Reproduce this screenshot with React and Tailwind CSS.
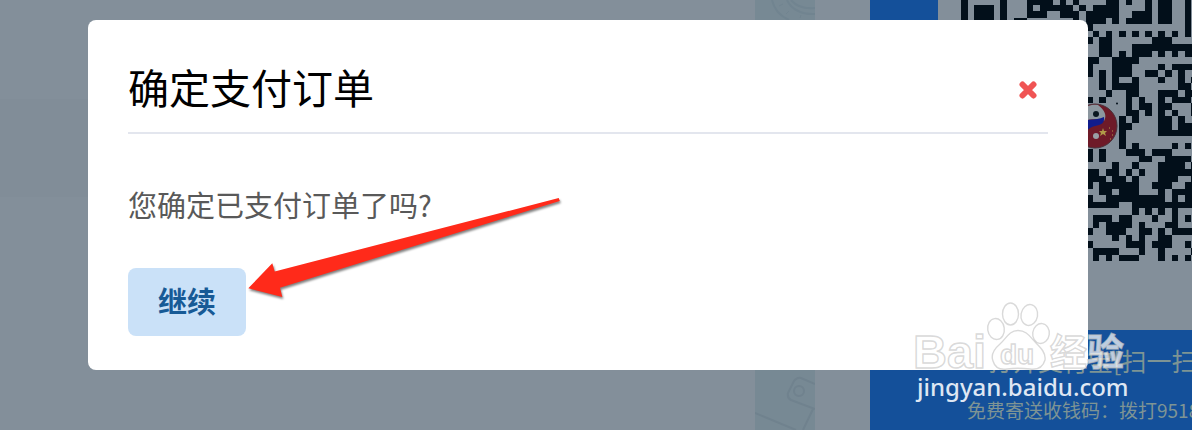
import React from 'react';

// QR modules: the first rows start at column 0, the rest at column 19
const topRows = [
    '#.....#...####.#.#....##.#..#.##..#.',
    '#.###.#...#.#####.#.####....#.##..#.',
    '#.###.#...###..###.#####..###.##..#.',
    '#.###.#.##.......#.###.#.####.##..#.'
];

const sideRows = [
    '#..............#.',
    '.#.#.#.#.#.#.#.#.',
    '#.##......###....',
    '..##...##########',
    '..##.#.###.#.#.##',
    '##..####.........',
    '#...###....#.####',
    '#.#.###..##.#.#..',
    '..#.#..#...#..#.#',
    '..#.####......##.',
    '...#..##...###.##',
    '#.#...#.#..#.###.',
    '......#.##.##...#',
    '......##.#.#.#..#',
    '.....#.#...##.#..',
    '.....##....##.###',
    '.....#.....######',
    '.....#...........',
    '.....#.#.....#.#.',
    '#.#...###.###....',
    '#.#.....##..####.',
    '....#..#...####.#',
    '##.##.#.#..######',
    '###.##.#...###..#',
    '#.######..###..##',
    '..##.###...#.####',
    '#..#########.#.##',
    '#####..##########',
    '.......#.#.#.#...',
    '.###.##...#..#.#.',
    '.#.####.#...##...',
    '#..###..##.#.####',
    '....#.#.#..##....',
    '#.....###.###..#.',
    '.####...#..#....#',
    '.#.#.###...#.#.#.'
];

const toPath = (rows, startCol, startRow) =>
    rows
        .flatMap((row, y) =>
            [...row].map((cell, x) => (cell === '#' ? `M${startCol + x} ${startRow + y}h1v1h-1z` : ''))
        )
        .join('');

const QrCode = () => (
    <svg width="231" height="262" viewBox="0 -4.5 231 262" aria-hidden="true">
        <g transform="scale(6.58)" fill="#020f1a" shapeRendering="crispEdges">
            <path d={toPath(topRows, 0, -1)} />
            <path d={toPath(sideRows, 19, 3)} />
        </g>
        <g transform="translate(134 121.5)">
            <circle r="23" fill="#838f9a" />
            <circle r="22" fill="#6e1a28" stroke="#4a3038" />
            <path d="M-22 0A22 22 0 0 1 3 -21C10 -16 12 -10 9 -5C4 -8 -10 -8 -22 0z" fill="#8c979f" />
            <path d="M-20 -2C-10 -8 0 -5 9 -9C10 -3 6 -1 0 0C-7 2 -10 6 -10 10C-16 10 -21 4 -20 -2z" fill="#101c8c" />
            <circle cx="1" cy="-12" r="3" fill="#0a1720" />
            <circle cx="1" cy="10" r="3" fill="#9aa0a5" />
            <path d="M8 2l1 3h3l-2 2 1 3-3-2-3 2 1-3-2-2h3z" fill="#b09a48" />
            <path d="M14 2h1M17 5h1M17 9h1M15 13h1" stroke="#b09a48" strokeWidth="1" />
        </g>
        <circle cx="156" cy="99" r="1" fill="#020f1a" />
    </svg>
);

const PatternStrip = () => (
    <div className="flex w-15 shrink-0 flex-col justify-between bg-[#778994]">
        <svg width="60" height="20" viewBox="0 0 60 20" fill="none" stroke="#718490" aria-hidden="true">
            <path d="M17 0C19 9 25 16 34 20M32 0C36 9 47 15 60 14M36 0C41 6 50 9 60 8" strokeWidth="2" />
            <path d="M24 6l4-2M31 14l3-3M45 18l1-3" />
        </svg>
        <svg width="60" height="60" viewBox="0 0 60 60" fill="none" stroke="#70828e" strokeWidth="2" aria-hidden="true">
            <path d="M60 14L46 8Q42 7 39 11L33 23Q32 28 36 30L60 39M0 43L41 60M58 39L48 60" />
            <circle cx="44" cy="21" r="5" />
        </svg>
    </div>
);

const PaymentPage = () => (
    <div className="flex min-h-screen bg-[#838f9a]">
        <div className="flex-1 pt-[99px]">
            <div className="h-[98px] bg-[#818d98]" />
        </div>
        <PatternStrip />
        <div className="ml-[55px] flex w-[322px] shrink-0 flex-col">
            <div className="flex h-[330px]">
                <div className="w-17 shrink-0 bg-[#14509a]" />
                <div className="pl-[23px]">
                    <QrCode />
                </div>
            </div>
            <div className="flex-1 overflow-hidden whitespace-nowrap bg-[#14509a] pt-3 text-[#7e9494]">
                <p className="pl-[118px] text-[25px] leading-9">打开支付宝[扫一扫</p>
                <p className="pl-[97px] pt-[18px] text-[19px] leading-7">免费寄送收钱码：拨打9518</p>
            </div>
        </div>
    </div>
);

const ConfirmDialog = () => (
    <section
        role="dialog"
        aria-labelledby="dialog-title"
        className="w-full max-w-[1000px] rounded-lg bg-white px-10 pt-9 pb-[34px]"
    >
        <header className="flex items-center justify-between border-b-2 border-[#e3e6ee] pr-[11px] pb-4">
            <h1 id="dialog-title" className="text-[41px] leading-[60px] font-normal text-black">
                确定支付订单
            </h1>
            <button type="button" aria-label="关闭" className="pt-2">
                <svg width="18" height="18" viewBox="0 0 18 18" aria-hidden="true">
                    <path d="M3.5 3.5l11 11M14.5 3.5l-11 11" stroke="#f05454" strokeWidth="6" strokeLinecap="round" />
                </svg>
            </button>
        </header>
        <p className="pt-[50px] text-[29px] leading-10 text-[#595959]">您确定已支付订单了吗?</p>
        <button
            type="button"
            className="mt-11 rounded-lg bg-[#cae1f8] px-[30px] pt-3 pb-4 text-[29px] leading-10 font-bold text-[#175a96]"
        >
            继续
        </button>
    </section>
);

const Arrow = () => (
    <svg
        width="330"
        height="120"
        viewBox="240 190 330 120"
        className="absolute top-[190px] left-60 drop-shadow-[1px_2px_1px_rgba(0,0,0,0.5)]"
        aria-hidden="true"
    >
        <path d="M248.3 288.3L272.3 263.3L274.7 271.4L558.7 198L559.8 201L280 287.7L282.3 297z" fill="#ff2a1a" />
    </svg>
);

const Watermark = () => (
    <svg
        width="232"
        height="110"
        viewBox="910 298 232 110"
        className="absolute top-[298px] left-[910px]"
        aria-hidden="true"
    >
        <g fill="#ffffff" fillOpacity="0.72" stroke="#c4c4c4" strokeOpacity="0.65" strokeWidth="1.4">
            <text x="913" y="368" fontSize="47" fontWeight="700" fontFamily="Liberation Sans, sans-serif">Bai</text>
            <ellipse cx="996" cy="329" rx="8.3" ry="10.5" transform="rotate(-8 996 329)" />
            <ellipse cx="1010.5" cy="314" rx="8" ry="11" />
            <ellipse cx="1029.3" cy="315" rx="8.3" ry="10.5" transform="rotate(10 1029.3 315)" />
            <ellipse cx="1041" cy="333.5" rx="8.3" ry="10" transform="rotate(8 1041 333.5)" />
            <path d="M1018 330.5C1009 330.5 1006 339 1000 344C993 350 991 356 993 361C995 368 1000 370 1007 369C1014 368 1022 368 1030 369C1038 370 1043 367 1045 360C1046 353 1041 348 1036 343C1030 337 1027 330.5 1018 330.5z" />
            <text x="1000" y="364" fontSize="28" fontWeight="700" fontFamily="Liberation Sans, sans-serif">du</text>
            <text x="1050" y="366" fontSize="37" fontWeight="700" fontFamily="Noto Sans CJK SC, sans-serif">经验</text>
        </g>
        <text
            x="917"
            y="396"
            fontSize="24"
            fontWeight="500"
            fontFamily="Noto Sans, sans-serif"
            fill="#dfe7f3"
        >
            jingyan.baidu.com
        </text>
    </svg>
);

const App = () => {
    return (
        <main className="relative min-h-screen overflow-hidden font-['Noto_Sans_CJK_SC',sans-serif]">
            <PaymentPage />
            <div className="absolute inset-0 pt-5 pr-[104px] pl-[88px]">
                <ConfirmDialog />
            </div>
            <Arrow />
            <Watermark />
        </main>
    );
};

export default App;
